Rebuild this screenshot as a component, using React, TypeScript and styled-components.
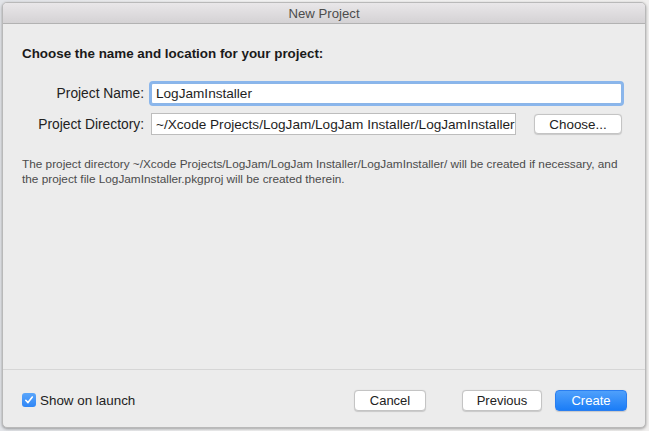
import React from "react";
import styled, { createGlobalStyle } from "styled-components";

const GlobalStyle = createGlobalStyle`
  html, body {
    margin: 0;
    padding: 0;
    background: #f2f2f2;
  }
  * {
    box-sizing: border-box;
  }
`;

const Desktop = styled.div`
  width: 649px;
  height: 431px;
  padding: 2px 0 0 2px;
  background: linear-gradient(90deg, #e2e4e8 0%, #f4f4f4 40%, #f0efee 100%);
  font-family: "Liberation Sans", Arial, sans-serif;
  overflow: hidden;
`;

const Window = styled.div`
  width: 644px;
  height: 426px;
  display: flex;
  flex-direction: column;
  background: #ececec;
  border: 1px solid #b9b9b9;
  border-radius: 5px;
  overflow: hidden;
  box-shadow: 0 1px 3px rgba(0, 0, 0, 0.35);
`;

const TitleBar = styled.div`
  height: 21px;
  flex: none;
  display: flex;
  align-items: center;
  justify-content: center;
  background: linear-gradient(#e9e7e9, #d4d2d4);
  border-bottom: 1px solid #b2b2b2;
  font-size: 13.2px;
  color: #4c4c4c;
`;

const Body = styled.div`
  flex: 1;
  padding: 22px 19px 0 19px;
  display: flex;
  flex-direction: column;
`;

const Heading = styled.div`
  font-size: 13.4px;
  font-weight: bold;
  color: #1a1a1a;
  line-height: 16px;
`;

const Form = styled.div`
  margin-top: 21px;
  display: grid;
  grid-template-columns: 122px 1fr;
  column-gap: 7px;
  row-gap: 9px;
  align-items: center;
`;

const Label = styled.div`
  font-size: 13.8px;
  color: #222;
  text-align: right;
`;

const FieldRow = styled.div`
  display: flex;
  align-items: center;
`;

const TextField = styled.div<{ $focused?: boolean; $width: number }>`
  width: ${(p) => p.$width}px;
  height: ${(p) => (p.$focused ? 21 : 22)}px;
  background: #fff;
  border: 1px solid ${(p) => (p.$focused ? "#8bb5e8" : "#bdbdbd")};
  box-shadow: ${(p) => (p.$focused ? "0 0 0 2px #8ab6ec" : "none")};
  border-radius: ${(p) => (p.$focused ? "2px" : "0")};
  padding: 0 0 0 4px;
  display: flex;
  align-items: center;
  font-size: 13.6px;
  color: #1e1e1e;
  white-space: nowrap;
  overflow: hidden;
`;

const PushButton = styled.button<{ $primary?: boolean; $width: number }>`
  width: ${(p) => p.$width}px;
  height: 21px;
  padding: 0;
  font-family: inherit;
  font-size: 13px;
  border-radius: 4px;
  color: ${(p) => (p.$primary ? "#fff" : "#222")};
  background: ${(p) => (p.$primary ? "linear-gradient(#4fa0fb, #1b7df7)" : "#fff")};
  border: 1px solid ${(p) => (p.$primary ? "#2a7ef0" : "#c4c4c4")};
  box-shadow: 0 0.5px 1px rgba(0, 0, 0, 0.15);
  display: flex;
  align-items: center;
  justify-content: center;
`;

const ChooseButton = styled(PushButton)`
  margin-left: 18px;
  height: 20px;
  font-size: 13.4px;
`;

const Note = styled.div`
  margin-top: 22px;
  font-size: 11.8px;
  line-height: 14.5px;
  color: #4b4b4b;
  white-space: nowrap;
`;

const Footer = styled.div`
  height: 58px;
  flex: none;
  border-top: 1px solid #d6d6d6;
  padding: 3px 18px 0 19px;
  display: flex;
  align-items: center;
`;

const CheckLabel = styled.label`
  display: flex;
  align-items: center;
  gap: 4px;
  font-size: 13.4px;
  color: #222;
  margin-right: auto;
`;

const CheckBox = styled.span`
  width: 14px;
  height: 14px;
  border-radius: 3px;
  background: linear-gradient(#5aa6fb, #2f86f6);
  display: flex;
  align-items: center;
  justify-content: center;
`;

const ButtonGroup = styled.div`
  display: flex;
  align-items: center;
`;

const CancelButton = styled(PushButton)`
  margin-right: 36px;
`;

const PreviousButton = styled(PushButton)`
  margin-right: 13px;
`;

export default function App() {
  return (
    <>
      <GlobalStyle />
      <Desktop>
        <Window>
          <TitleBar>New Project</TitleBar>
          <Body>
            <Heading>Choose the name and location for your project:</Heading>
            <Form>
              <Label>Project Name:</Label>
              <FieldRow>
                <TextField $focused $width={471}>
                  LogJamInstaller
                </TextField>
              </FieldRow>
              <Label>Project Directory:</Label>
              <FieldRow>
                <TextField $width={365}>~/Xcode Projects/LogJam/LogJam Installer/LogJamInstaller</TextField>
                <ChooseButton $width={88}>Choose...</ChooseButton>
              </FieldRow>
            </Form>
            <Note>
              The project directory ~/Xcode Projects/LogJam/LogJam Installer/LogJamInstaller/ will be created if necessary, and
              <br />
              the project file LogJamInstaller.pkgproj will be created therein.
            </Note>
          </Body>
          <Footer>
            <CheckLabel>
              <CheckBox>
                <svg width="10" height="10" viewBox="0 0 10 10">
                  <path d="M1.8 5.3 L4 7.6 L8.3 2" fill="none" stroke="#fff" strokeWidth="1.6" strokeLinecap="round" strokeLinejoin="round" />
                </svg>
              </CheckBox>
              Show on launch
            </CheckLabel>
            <ButtonGroup>
              <CancelButton $width={72}>Cancel</CancelButton>
              <PreviousButton $width={80}>Previous</PreviousButton>
              <PushButton $primary $width={72}>
                Create
              </PushButton>
            </ButtonGroup>
          </Footer>
        </Window>
      </Desktop>
    </>
  );
}
